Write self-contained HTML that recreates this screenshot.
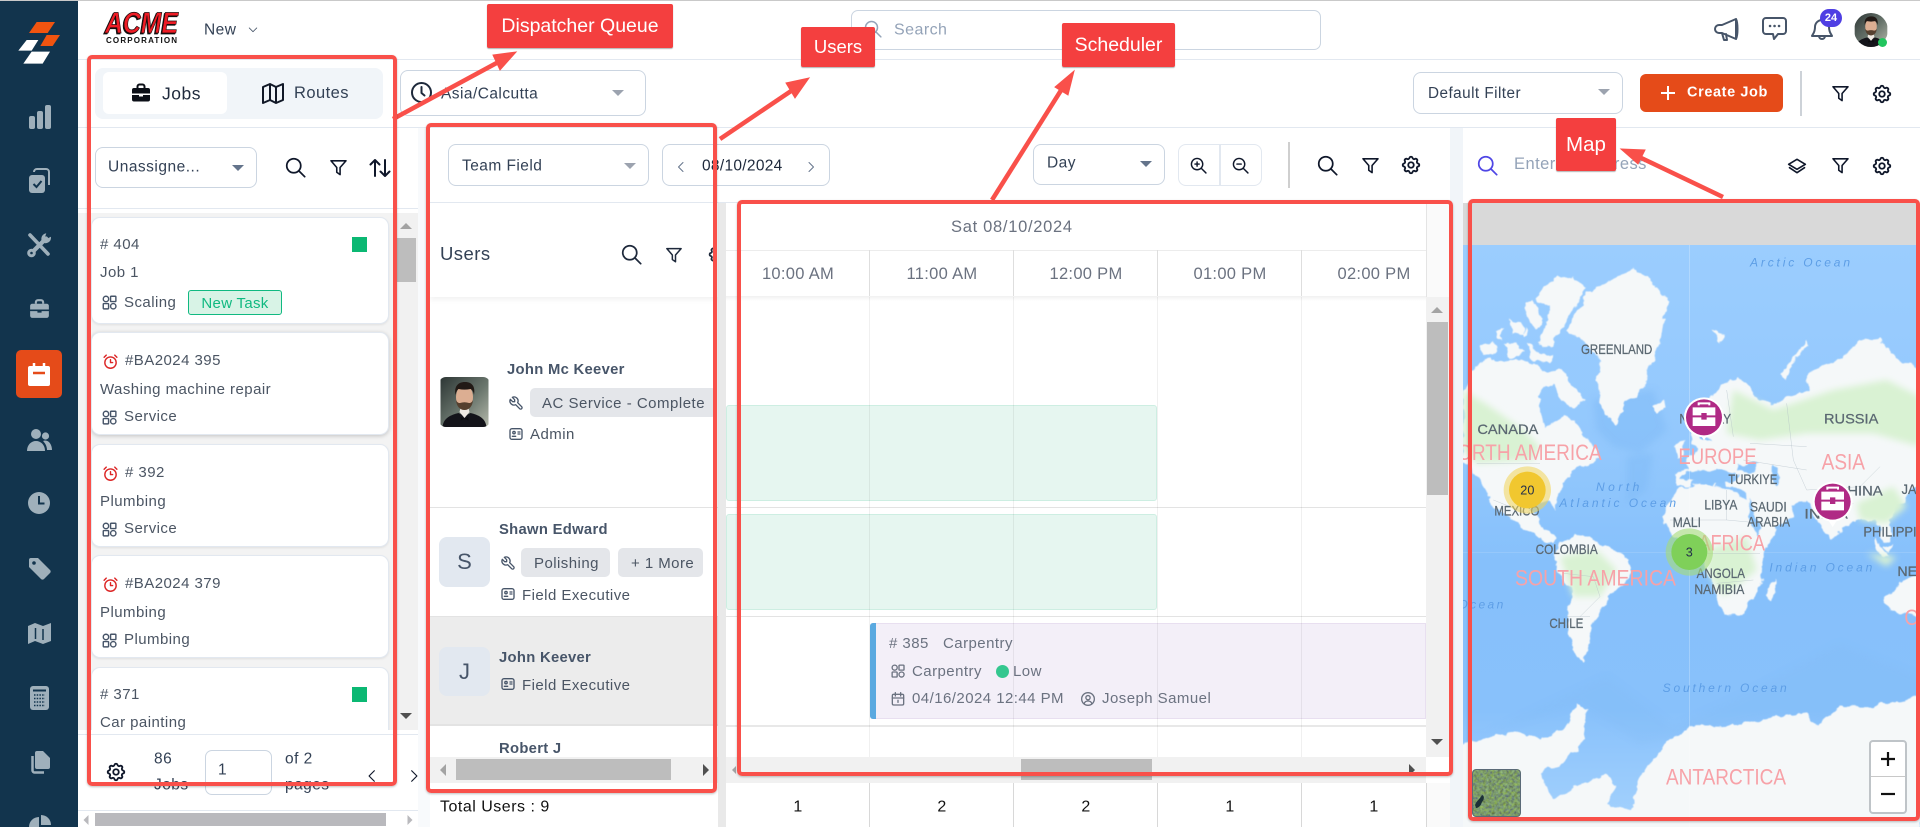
<!DOCTYPE html>
<html lang="en"><head><meta charset="utf-8"><title>Scheduler</title>
<style>
*{box-sizing:border-box}
html,body{margin:0;padding:0;width:1920px;height:827px;overflow:hidden;background:#fff;font-family:"Liberation Sans",sans-serif;color:#334155}
#p{position:absolute;left:0;top:0;width:1920px;height:827px;overflow:hidden}
.a{position:absolute}
.t{position:absolute;white-space:nowrap;transform:translateY(calc(-50% + 3px));font-size:15px;letter-spacing:.45px;line-height:1.2}
.sel{position:absolute;background:#fff;border:1px solid #cbd5e1;border-radius:8px}
.caret{position:absolute;width:0;height:0;border-left:6px solid transparent;border-right:6px solid transparent;border-top:6px solid #64748b;transform:translate(-50%,-50%)}
.ic{position:absolute;fill:none;stroke:currentColor;stroke-width:2;stroke-linecap:round;stroke-linejoin:round}
.card{position:absolute;left:91px;width:298px;background:#fff;border:1px solid #e2e8f0;border-radius:9px;box-shadow:0 1px 2px rgba(0,0,0,.08)}
.g{color:#4b5563}
.chip{position:absolute;background:#e4e6ea;border-radius:5px}
.nm{font-weight:bold;color:#475569;font-size:14.8px;letter-spacing:.3px}
.av{position:absolute;left:439px;width:51px;background:#e2e8f0;border-radius:8px;color:#475569;font-size:22px;display:flex;align-items:center;justify-content:center}
.h{position:absolute;height:1px}
.v{position:absolute;width:1px}
.lab{position:absolute;background:#f43f3f;color:#fff;font-size:19.5px;border-radius:2px;box-shadow:0 1px 1px rgba(0,0,0,.3);display:flex;align-items:center;justify-content:center}
.red{position:absolute;border:4px solid #f9504a;border-radius:5px;box-shadow:0 1px 2px rgba(0,0,0,.25)}
.tm{color:#6b7280;font-size:16.5px;letter-spacing:.3px;transform:translate(-50%,calc(-50% + 3px))}
.tot{color:#111;font-size:16px;transform:translate(-50%,calc(-50% + 3px))}
.ev{color:#6b7280}
.map-c{font-family:"Liberation Sans",sans-serif;fill:#f7a2a8;font-size:66px}
.map-n{font-family:"Liberation Sans",sans-serif;fill:#5b6872;stroke:#5b6872;stroke-width:.8;font-size:42px}
.map-o{font-family:"Liberation Sans",sans-serif;fill:#5d9ee6;font-size:36px;font-style:italic}
</style></head><body><div id="p">

<svg width="0" height="0" style="position:absolute">
<defs>
<symbol id="search" viewBox="0 0 24 24"><circle cx="10" cy="10" r="8"/><path d="M16 16l6.500 6.500"/></symbol>
<symbol id="filter" viewBox="0 0 24 24"><path d="M2.500 3.500h19l-7.500 8.500v9l-4.200-3v-6z"/></symbol>
<symbol id="gear" viewBox="0 0 24 24"><path d="M10.325 4.317c.426 -1.756 2.924 -1.756 3.350 0a1.724 1.724 0 0 0 2.573 1.066c1.543 -.94 3.310 .826 2.370 2.370a1.724 1.724 0 0 0 1.065 2.572c1.756 .426 1.756 2.924 0 3.350a1.724 1.724 0 0 0 -1.066 2.573c.94 1.543 -.826 3.310 -2.370 2.370a1.724 1.724 0 0 0 -2.572 1.065c-.426 1.756 -2.924 1.756 -3.350 0a1.724 1.724 0 0 0 -2.573 -1.066c-1.543 .94 -3.310 -.826 -2.370 -2.370a1.724 1.724 0 0 0 -1.065 -2.572c-1.756 -.426 -1.756 -2.924 0 -3.350a1.724 1.724 0 0 0 1.066 -2.573c-.94 -1.543 .826 -3.310 2.370 -2.370c1 .608 2.296 .07 2.572 -1.065z"/><circle cx="12" cy="12" r="3"/></symbol>
<symbol id="grid" viewBox="0 0 24 24"><circle cx="7" cy="7" r="3.800"/><rect x="13.500" y="3.200" width="7.500" height="7.500" rx="1"/><rect x="3.200" y="13.500" width="7.500" height="7.500" rx="1"/><circle cx="17.300" cy="17.300" r="3.800"/></symbol>
<symbol id="alarm" viewBox="0 0 24 24"><circle cx="12" cy="13.500" r="8"/><path d="M12 9.500v4h3M3 6l3-3M21 6l-3-3"/></symbol>
<symbol id="wrench" viewBox="0 0 24 24"><path d="M7 10h3v-3l-3.500 -3.500a6 6 0 0 1 8 8l6 6a2 2 0 0 1 -3 3l-6 -6a6 6 0 0 1 -8 -8l3.500 3.500"/></symbol>
<symbol id="idc" viewBox="0 0 24 24"><rect x="3" y="4" width="18" height="16" rx="3"/><circle cx="9" cy="10" r="1.800"/><path d="M6.500 15.500h5M15 9h3M15 12h3"/></symbol>
<symbol id="cal" viewBox="0 0 24 24"><rect x="3.500" y="5" width="17" height="16" rx="2"/><path d="M8 2.500v5M16 2.500v5M3.500 10.500h17M12 14v3"/></symbol>
<symbol id="usr" viewBox="0 0 24 24"><circle cx="12" cy="12" r="9.500"/><circle cx="12" cy="10" r="3.200"/><path d="M6.200 19c1-3 3.200-4 5.800-4s4.800 1 5.800 4"/></symbol>
<symbol id="chev" viewBox="0 0 24 24"><path d="M8 3l9 9-9 9"/></symbol>
<symbol id="chevl" viewBox="0 0 24 24"><path d="M16 3l-9 9 9 9"/></symbol>
<symbol id="person" viewBox="0 0 48 50">
<defs><linearGradient id="pg" x1="0" x2="1" y1="0" y2="1"><stop offset="0" stop-color="#2d3635"/><stop offset=".55" stop-color="#6a766d"/><stop offset="1" stop-color="#b5b9ab"/></linearGradient></defs>
<rect width="48" height="50" fill="url(#pg)"/>
<path d="M2 50c1-9 8-12 16-14l6 3 6-3c8 2 15 5 16 14z" fill="#14141a"/>
<path d="M19 35l5 6 5-6-1-4h-8z" fill="#efe9e2"/><path d="M20 40l4 1.500 4-1.500v3.500l-4-1.500-4 1.500z" fill="#0b0b0e"/>
<ellipse cx="24" cy="20" rx="8.500" ry="12" fill="#dcae92"/>
<path d="M15.500 23c.5 6 3.500 10 8.500 10s8-4 8.500-10c-1 2-2 3-4 3-3-1-6-1-9 0-2 0-3-1-4-3z" fill="#55402f"/>
<path d="M15 18c-1.500-8 2-13 9.500-13s10.500 5 9 13c-.5-3-1.500-5-3.500-6-4 .8-8 .8-12 0-1.500 1-2.500 3-3 6z" fill="#221a16"/>
</symbol>
<symbol id="bag" viewBox="0 0 24 24"><path d="M8.500 7V5.500a2 2 0 0 1 2-2h3a2 2 0 0 1 2 2V7" fill="none" stroke="currentColor" stroke-width="2"/><path d="M3 9a2 2 0 0 1 2-2h14a2 2 0 0 1 2 2v3.500H3z" fill="currentColor"/><path d="M3 14h7v1.500h4V14h7v4.500a2 2 0 0 1-2 2H5a2 2 0 0 1-2-2z" fill="currentColor"/></symbol>
</defs></svg>

<!-- sidebar -->
<div class="a" style="left:0;top:0;width:78px;height:827px;background:#12344d"></div>
<div class="a" style="left:0;top:0;width:1920px;height:1px;background:#c9c9c9"></div>
<svg class="a" style="left:0;top:0" width="78" height="70" viewBox="0 0 234 210">
<path d="M110 66h55l-22 33h-56z" fill="#f05410"/><path d="M140 105h40l-22 33h-37z" fill="#f05410"/>
<path d="M80 120h35l-20 32H55z" fill="#fff"/><path d="M95 155h55l-22 36H70z" fill="#fff"/></svg>
<svg class="a" style="left:26px;top:103px;color:#9fb0bb" width="26" height="26" viewBox="0 0 26 26" fill="#9fb0bb"><rect x="3" y="13" width="6" height="13" rx="2"/><rect x="11" y="8" width="6" height="18" rx="2"/><rect x="19" y="2" width="6" height="24" rx="2"/></svg>
<svg class="a" style="left:26px;top:167px" width="26" height="26" viewBox="0 0 26 26"><rect x="3" y="8" width="16" height="18" rx="3" fill="#9fb0bb"/><path d="M8 5a3 3 0 0 1 3-3h9a3 3 0 0 1 3 3v13" fill="none" stroke="#9fb0bb" stroke-width="2"/><path d="M7.500 17l3 3 5-6" fill="none" stroke="#12344d" stroke-width="2"/></svg>
<svg class="a" style="left:26px;top:232px" width="26" height="26" viewBox="0 0 26 26" fill="none" stroke="#9fb0bb" stroke-linecap="round"><path d="M4 3l18 19" stroke-width="3.600"/><path d="M20 6.500L5.500 21" stroke-width="4.200"/><path d="M24.500 5.500a5 5 0 0 1-7.500 4.500 5 5 0 0 1 2.500-8l-1 3 3 2z" fill="#9fb0bb" stroke-width="1"/><circle cx="5.500" cy="21" r="3.800" fill="#9fb0bb" stroke-width="1"/><circle cx="5.500" cy="21" r="1.300" fill="#12344d" stroke="none"/></svg>
<svg class="a" style="left:27px;top:296px;color:#9fb0bb" width="25" height="26"><use href="#bag"/></svg>
<div class="a" style="left:16px;top:350px;width:46px;height:48px;background:#e54b19;border-radius:5px"></div>
<svg class="a" style="left:27px;top:362px" width="24" height="25" viewBox="0 0 24 25"><path d="M3 4h18a2 2 0 0 1 2 2v16a2 2 0 0 1-2 2H3a2 2 0 0 1-2-2V6a2 2 0 0 1 2-2z" fill="#fff"/><path d="M7 1v5M17 1v5" stroke="#fff" stroke-width="2.500"/><path d="M6 11h12" stroke="#e54b19" stroke-width="2.500"/></svg>
<svg class="a" style="left:27px;top:428px" width="25" height="24" viewBox="0 0 25 24" fill="#9fb0bb"><circle cx="9" cy="6" r="5"/><circle cx="18.500" cy="8" r="3.600"/><path d="M0 23c0-6 4-10 9-10s9 4 9 10z"/><path d="M16 13c5-2 9 3 9 9h-5c0-4-2-7-4-9z"/></svg>
<svg class="a" style="left:28px;top:492px" width="22" height="22" viewBox="0 0 22 22"><circle cx="11" cy="11" r="11" fill="#9fb0bb"/><path d="M11 4v7.500h5.500" fill="none" stroke="#12344d" stroke-width="2"/></svg>
<svg class="a" style="left:28px;top:557px" width="23" height="23" viewBox="0 0 23 23"><path d="M1 3a2 2 0 0 1 2-2h7l12 12a2 2 0 0 1 0 3l-6 6a2 2 0 0 1-3 0L1 10z" fill="#9fb0bb"/><circle cx="6" cy="6" r="1.800" fill="#12344d"/></svg>
<svg class="a" style="left:28px;top:622px" width="23" height="23" viewBox="0 0 23 23"><path d="M0 4l7-3 8 3 8-3v18l-8 3-8-3-7 3z" fill="#9fb0bb"/><path d="M7.500 6v11M15 7v11" stroke="#12344d" stroke-width="1.500"/></svg>
<svg class="a" style="left:30px;top:686px" width="19" height="24" viewBox="0 0 19 24"><rect width="19" height="24" rx="3" fill="#9fb0bb"/><rect x="3" y="3.500" width="13" height="2" fill="#12344d"/><path d="M4 9h11M4 12.500h11M4 16h11M4 19.500h11" stroke="#12344d" stroke-width="1.500" stroke-dasharray="1.500 1.200"/></svg>
<svg class="a" style="left:29px;top:751px" width="21" height="24" viewBox="0 0 21 24"><path d="M8 0h6l7 7v9a2 2 0 0 1-2 2H8a2 2 0 0 1-2-2V2a2 2 0 0 1 2-2z" fill="#9fb0bb"/><path d="M3.500 5v14.500a2 2 0 0 0 2 2H15" fill="none" stroke="#9fb0bb" stroke-width="2.500"/></svg>
<svg class="a" style="left:29px;top:815px" width="22" height="12" viewBox="0 0 22 12"><path d="M10 2a10 10 0 0 0-10 10h10zM12 0a10 10 0 0 1 10 10H12z" fill="#9fb0bb"/></svg>

<!-- header -->
<div class="h" style="left:78px;top:59px;width:1842px;background:#e2e8f0"></div>
<svg class="a" style="left:100px;top:8px" width="84" height="38" viewBox="0 0 84 38">
<text x="5" y="25" font-family="Liberation Sans" font-weight="bold" font-style="italic" font-size="30" fill="#ee1c25" stroke="#1a0a0a" stroke-width=".7" textLength="73" lengthAdjust="spacingAndGlyphs" style="filter:drop-shadow(-1px 1px 0 #111)">ACME</text>
<text x="6" y="35" font-family="Liberation Sans" font-weight="bold" font-size="8" fill="#111" textLength="71" lengthAdjust="spacing">CORPORATION</text></svg>
<div class="t" style="left:204px;top:28px;font-size:15.5px;color:#334155">New</div>
<svg class="ic" style="left:248px;top:25px;color:#475569" width="10" height="10" viewBox="0 0 24 24"><path d="M3 7l9 9 9-9"/></svg>
<div class="a" style="left:851px;top:10px;width:470px;height:40px;border:1px solid #cbd5e1;border-radius:7px"></div>
<svg class="ic" style="left:864px;top:20px;color:#94a3b8" width="18" height="18"><use href="#search"/></svg>
<div class="t" style="left:894px;top:27px;font-size:16px;color:#94a3b8">Search</div>
<svg class="ic" style="left:1714px;top:16px;color:#475569" width="27" height="27" viewBox="0 0 27 27"><path d="M22 3L8 9H5a3.500 3.500 0 0 0 0 8h3l14 6zM8 17l2 7h3l-1-6M22 3c2 4 2 16 0 20"/></svg>
<svg class="ic" style="left:1761px;top:16px;color:#475569" width="27" height="27" viewBox="0 0 27 27"><path d="M5 2h17a3 3 0 0 1 3 3v10a3 3 0 0 1-3 3h-5l-4 5-1-5H5a3 3 0 0 1-3-3V5a3 3 0 0 1 3-3z"/><path d="M9 10h.1M13.500 10h.1M18 10h.1" stroke-width="2.500"/></svg>
<svg class="ic" style="left:1810px;top:17px;color:#475569" width="25" height="26" viewBox="0 0 25 26"><path d="M12 3a7 7 0 0 1 7 7c0 6 3 8 3 9H2c0-1 3-3 3-9a7 7 0 0 1 7-7zM9 19a3 3 0 0 0 6 0"/></svg>
<div class="a" style="left:1820px;top:9px;width:22px;height:18px;border-radius:9px;background:#4f3fe3;color:#fff;font-size:11px;font-weight:bold;text-align:center;line-height:18px">24</div>
<svg class="a" style="left:1854px;top:13px;border-radius:50%" width="34" height="34"><use href="#person" width="34" height="34"/></svg>
<div class="a" style="left:1878px;top:38px;width:9px;height:9px;border-radius:50%;background:#22c55e"></div>

<!-- subheader -->
<div class="h" style="left:78px;top:127px;width:1842px;background:#e2e8f0"></div>
<div class="a" style="left:95px;top:68px;width:288px;height:51px;background:#f1f5f9;border-radius:8px"></div>
<div class="a" style="left:103px;top:72px;width:124px;height:42px;background:#fff;border-radius:6px"></div>
<svg class="a" style="left:129px;top:81px;color:#0b0f17" width="24" height="24"><use href="#bag"/></svg>
<div class="t" style="left:162px;top:91px;font-size:17.500px;letter-spacing:.5px;color:#1e293b">Jobs</div>
<svg class="ic" style="left:261px;top:81px;color:#111827" width="24" height="24"><path d="M2 6l7-3 6 3 7-3v16l-7 3-6-3-7 3zM9 3v16M15 6v16"/></svg>
<div class="t" style="left:294px;top:91px;font-size:16.5px;color:#334155">Routes</div>

<div class="sel" style="left:400px;top:70px;width:246px;height:46px"></div>
<svg class="ic" style="left:411px;top:82px;color:#1e293b" width="21" height="21"><circle cx="10.500" cy="10.500" r="9.500"/><path d="M10.500 5v6l3 2.500"/></svg>
<div class="t" style="left:441px;top:92px;font-size:15.5px">Asia/Calcutta</div>
<div class="caret" style="left:618px;top:93px;border-top-color:#9ca3af"></div>

<div class="sel" style="left:1413px;top:72px;width:210px;height:42px"></div>
<div class="t" style="left:1428px;top:91px;font-size:15.3px">Default Filter</div>
<div class="caret" style="left:1604px;top:92px;border-top-color:#9ca3af"></div>
<div class="a" style="left:1640px;top:74px;width:143px;height:38px;background:#e54b19;border-radius:6px"></div>
<svg class="a" style="left:1660px;top:85px" width="16" height="16"><path d="M8 1v14M1 8h14" stroke="#fff" stroke-width="2"/></svg>
<div class="t" style="left:1687px;top:90px;color:#fff;font-weight:bold;font-size:14.5px;letter-spacing:.6px">Create Job</div>
<div class="a" style="left:1800px;top:71px;width:2px;height:45px;background:#cdd2d8"></div>
<svg class="ic" style="left:1831px;top:84px;color:#0f172a" width="19" height="19"><use href="#filter"/></svg>
<svg class="ic" style="left:1871px;top:83px;color:#0f172a" width="22" height="22"><use href="#gear"/></svg>

<!-- dispatcher -->
<div class="a" style="left:78px;top:128px;width:340px;height:699px;background:#fff"></div>
<div class="h" style="left:78px;top:208px;width:340px;background:#e2e8f0"></div>
<div class="sel" style="left:95px;top:147px;width:162px;height:41px"></div>
<div class="t" style="left:108px;top:165px;font-size:15.5px;letter-spacing:.5px">Unassigne...</div>
<div class="caret" style="left:238px;top:168px"></div>
<svg class="ic" style="left:285px;top:157px;color:#0f172a" width="21" height="21"><use href="#search"/></svg>
<svg class="ic" style="left:329px;top:158px;color:#0f172a" width="19" height="19"><use href="#filter"/></svg>
<svg class="ic" style="left:369px;top:158px;color:#0f172a" width="22" height="20" viewBox="0 0 22 20"><path d="M6 18V2M1.500 6.500L6 2l4.500 4.500M16 2v16M11.500 13.500L16 18l4.500-4.500"/></svg>

<div class="a" style="left:78px;top:213px;width:317px;height:517px;background:#f3f3f3"></div>
<div class="a" style="left:395px;top:213px;width:23px;height:517px;background:#f1f1f1"></div>
<div class="a" style="left:397px;top:238px;width:19px;height:44px;background:#bdbdbd"></div>
<div class="caret" style="left:406px;top:226px;border-top:0;border-bottom:6px solid #a3a3a3"></div>
<div class="caret" style="left:406px;top:716px;border-top-color:#505050"></div>

<div class="card" style="top:217px;height:107px"></div>
<div class="t g" style="left:100px;top:242px">#&nbsp;404</div>
<div class="a" style="left:352px;top:237px;width:15px;height:15px;background:#0bb873"></div>
<div class="t g" style="left:100px;top:270px">Job 1</div>
<svg class="ic" style="left:101px;top:294px;color:#475569" width="17" height="17"><use href="#grid"/></svg>
<div class="t g" style="left:124px;top:300px">Scaling</div>
<div class="a" style="left:188px;top:290px;width:94px;height:25px;background:#d8f3e6;border:1px solid #10b981;border-radius:3px;color:#10b981;font-size:15px;text-align:center;line-height:25px;letter-spacing:.3px">New Task</div>

<div class="card" style="top:332px;height:103px;box-shadow:0 1px 4px rgba(0,0,0,.2)"></div>
<svg class="ic" style="left:102px;top:353px;color:#dc2626" width="17" height="17"><use href="#alarm"/></svg>
<div class="t g" style="left:125px;top:358px">#BA2024 395</div>
<div class="t g" style="left:100px;top:387px">Washing machine repair</div>
<svg class="ic" style="left:101px;top:409px;color:#475569" width="17" height="17"><use href="#grid"/></svg>
<div class="t g" style="left:124px;top:414px">Service</div>

<div class="card" style="top:444px;height:103px"></div>
<svg class="ic" style="left:102px;top:465px;color:#dc2626" width="17" height="17"><use href="#alarm"/></svg>
<div class="t g" style="left:125px;top:470px">#&nbsp;392</div>
<div class="t g" style="left:100px;top:499px">Plumbing</div>
<svg class="ic" style="left:101px;top:521px;color:#475569" width="17" height="17"><use href="#grid"/></svg>
<div class="t g" style="left:124px;top:526px">Service</div>

<div class="card" style="top:555px;height:103px"></div>
<svg class="ic" style="left:102px;top:576px;color:#dc2626" width="17" height="17"><use href="#alarm"/></svg>
<div class="t g" style="left:125px;top:581px">#BA2024 379</div>
<div class="t g" style="left:100px;top:610px">Plumbing</div>
<svg class="ic" style="left:101px;top:632px;color:#475569" width="17" height="17"><use href="#grid"/></svg>
<div class="t g" style="left:124px;top:637px">Plumbing</div>

<div class="a" style="left:78px;top:667px;width:317px;height:63px;overflow:hidden">
<div class="card" style="left:13px;top:0;height:100px"></div>
<div class="t g" style="left:22px;top:25px">#&nbsp;371</div>
<div class="a" style="left:274px;top:20px;width:15px;height:15px;background:#0bb873"></div>
<div class="t g" style="left:22px;top:53px">Car painting</div>
</div>

<div class="h" style="left:78px;top:734px;width:340px;background:#e2e8f0"></div>
<svg class="ic" style="left:105px;top:761px;color:#0f172a" width="22" height="22"><use href="#gear"/></svg>
<div class="t" style="left:154px;top:757px;font-size:15.5px">86</div>
<div class="t" style="left:154px;top:783px;font-size:15.5px">Jobs</div>
<div class="a" style="left:205px;top:750px;width:67px;height:45px;border:1px solid #cbd5e1;border-radius:7px"></div>
<div class="t" style="left:218px;top:768px;font-size:15.5px">1</div>
<div class="t" style="left:285px;top:757px;font-size:15.5px">of 2</div>
<div class="t" style="left:285px;top:783px;font-size:15.5px">pages</div>
<svg class="ic" style="left:365px;top:767px;color:#0f172a" width="14" height="18"><use href="#chevl"/></svg>
<svg class="ic" style="left:407px;top:767px;color:#0f172a" width="14" height="18"><use href="#chev"/></svg>
<div class="h" style="left:78px;top:810px;width:340px;background:#e2e8f0"></div>
<div class="a" style="left:95px;top:813px;width:291px;height:13px;background:#b9b9bd"></div>
<div class="caret" style="left:86px;top:820px;border-left:0;border-right:5px solid #b9b9bd;border-top:5px solid transparent;border-bottom:5px solid transparent"></div>
<div class="caret" style="left:410px;top:820px;border-right:0;border-left:5px solid #b9b9bd;border-top:5px solid transparent;border-bottom:5px solid transparent"></div>

<!-- gap columns -->
<div class="a" style="left:418px;top:128px;width:12px;height:699px;background:#f8fafc"></div>
<div class="a" style="left:1450px;top:128px;width:13px;height:699px;background:#f1f5f9"></div>

<!-- middle toolbar -->
<div class="h" style="left:430px;top:202px;width:1020px;background:#e2e8f0"></div>
<div class="sel" style="left:448px;top:144px;width:201px;height:42px"></div>
<div class="t" style="left:462px;top:164px;font-size:15.5px">Team Field</div>
<div class="caret" style="left:630px;top:166px;border-top-color:#9ca3af"></div>
<div class="sel" style="left:662px;top:144px;width:168px;height:42px"></div>
<svg class="ic" style="left:675px;top:159px;color:#64748b" width="12" height="16"><use href="#chevl"/></svg>
<div class="t" style="left:702px;top:164px;font-size:15.5px;letter-spacing:.3px;color:#1e293b">08/10/2024</div>
<svg class="ic" style="left:805px;top:159px;color:#64748b" width="12" height="16"><use href="#chev"/></svg>
<div class="sel" style="left:1033px;top:144px;width:132px;height:41px"></div>
<div class="t" style="left:1047px;top:161px;font-size:15.5px">Day</div>
<div class="caret" style="left:1146px;top:164px"></div>
<div class="sel" style="left:1178px;top:144px;width:84px;height:42px;border-color:#e2e8f0"></div>
<div class="a" style="left:1219px;top:145px;width:2px;height:40px;background:#e2e8f0"></div>
<svg class="ic" style="left:1190px;top:157px;color:#0f172a" width="17" height="17"><use href="#search"/><path d="M7 10h6M10 7v6" transform="scale(.708)"/></svg>
<svg class="ic" style="left:1232px;top:157px;color:#0f172a" width="17" height="17"><use href="#search"/><path d="M7 10h6" transform="scale(.708)"/></svg>
<div class="a" style="left:1288px;top:142px;width:2px;height:46px;background:#cfcfcf"></div>
<svg class="ic" style="left:1317px;top:155px;color:#0f172a" width="21" height="21"><use href="#search"/></svg>
<svg class="ic" style="left:1361px;top:156px;color:#0f172a" width="19" height="19"><use href="#filter"/></svg>
<svg class="ic" style="left:1400px;top:154px;color:#0f172a" width="22" height="22"><use href="#gear"/></svg>

<!-- users panel -->
<div class="a" style="left:430px;top:203px;width:288px;height:94px;background:#fff;box-shadow:0 3px 5px rgba(0,0,0,.05)"></div>
<div class="t" style="left:440px;top:251px;font-size:18.5px;color:#334155">Users</div>
<svg class="ic" style="left:621px;top:244px;color:#1e293b" width="21" height="21"><use href="#search"/></svg>
<svg class="ic" style="left:665px;top:246px;color:#1e293b" width="18" height="18"><use href="#filter"/></svg>
<div class="a" style="left:705px;top:243px;width:11px;height:24px;overflow:hidden"><svg class="ic" style="left:2px;top:1px;color:#1e293b" width="21" height="21"><use href="#gear"/></svg></div>

<div class="h" style="left:430px;top:507px;width:288px;background:#e3e3e3"></div>
<div class="a" style="left:430px;top:616px;width:288px;height:110px;background:#ececec;border-top:1px solid #e3e3e3;border-bottom:2px solid #e3e3e3"></div>

<svg class="a" style="left:439px;top:377px;border-radius:7px" width="51" height="50"><use href="#person" width="51" height="50"/></svg>
<div class="t nm" style="left:507px;top:368px">John Mc Keever</div>
<svg class="ic" style="left:508px;top:395px;color:#475569" width="16" height="16"><use href="#wrench"/></svg>
<div class="chip" style="left:530px;top:388px;width:187px;height:29px"></div>
<div class="t g" style="left:542px;top:401px;letter-spacing:.5px">AC Service - Complete</div>
<svg class="ic" style="left:508px;top:426px;color:#475569" width="16" height="16"><use href="#idc"/></svg>
<div class="t g" style="left:530px;top:432px">Admin</div>

<div class="av" style="top:537px;height:50px">S</div>
<div class="t nm" style="left:499px;top:528px">Shawn Edward</div>
<svg class="ic" style="left:500px;top:555px;color:#475569" width="16" height="16"><use href="#wrench"/></svg>
<div class="chip" style="left:521px;top:548px;width:89px;height:29px"></div>
<div class="t g" style="left:534px;top:561px">Polishing</div>
<div class="chip" style="left:618px;top:548px;width:85px;height:29px"></div>
<div class="t g" style="left:631px;top:561px">+ 1 More</div>
<svg class="ic" style="left:500px;top:586px;color:#475569" width="16" height="16"><use href="#idc"/></svg>
<div class="t g" style="left:522px;top:593px">Field Executive</div>

<div class="av" style="top:647px;height:49px">J</div>
<div class="t nm" style="left:499px;top:656px">John Keever</div>
<svg class="ic" style="left:500px;top:676px;color:#475569" width="16" height="16"><use href="#idc"/></svg>
<div class="t g" style="left:522px;top:683px">Field Executive</div>
<div class="t nm" style="left:499px;top:747px">Robert J</div>

<div class="a" style="left:430px;top:757px;width:288px;height:26px;background:#f1f1f1"></div>
<div class="a" style="left:456px;top:759px;width:215px;height:21px;background:#bdbdbd"></div>
<div class="caret" style="left:443px;top:770px;border-left:0;border-right:6px solid #a3a3a3;border-top:6px solid transparent;border-bottom:6px solid transparent"></div>
<div class="caret" style="left:706px;top:770px;border-right:0;border-left:6px solid #505050;border-top:6px solid transparent;border-bottom:6px solid transparent"></div>
<div class="t" style="left:440px;top:804px;font-size:16px;font-weight:normal;color:#111;letter-spacing:.5px">Total Users : 9</div>

<!-- divider -->
<div class="a" style="left:718px;top:203px;width:8px;height:624px;background:#e9e9e9"></div>

<!-- scheduler -->
<div class="h" style="left:726px;top:250px;width:700px;background:#ececec"></div>
<div class="a" style="left:726px;top:296px;width:700px;height:5px;background:linear-gradient(#f1f1f1,#fff)"></div>
<div class="t" style="left:951px;top:225px;font-size:16.5px;color:#6b7280;letter-spacing:.7px">Sat 08/10/2024</div>
<div class="t tm" style="left:798px;top:272px">10:00 AM</div>
<div class="t tm" style="left:942px;top:272px">11:00 AM</div>
<div class="t tm" style="left:1086px;top:272px">12:00 PM</div>
<div class="t tm" style="left:1230px;top:272px">01:00 PM</div>
<div class="t tm" style="left:1374px;top:272px">02:00 PM</div>
<div class="v" style="left:869px;top:250px;height:46px;background:#dedede"></div>
<div class="v" style="left:1013px;top:250px;height:46px;background:#dedede"></div>
<div class="v" style="left:1157px;top:250px;height:46px;background:#dedede"></div>
<div class="v" style="left:1301px;top:250px;height:46px;background:#dedede"></div>
<div class="a" style="left:1426px;top:203px;width:24px;height:94px;background:#fafafa;border-left:1px solid #e4e4e4"></div>

<div class="a" style="left:726px;top:405px;width:431px;height:96px;background:#e6f6f0;border:1px solid #cdeee2;border-radius:3px"></div>
<div class="a" style="left:726px;top:514px;width:431px;height:96px;background:#e6f6f0;border:1px solid #cdeee2;border-radius:3px"></div>
<div class="a" style="left:870px;top:623px;width:556px;height:96px;background:#f3eff8;border:1px solid #e8dff0;border-left:0;border-radius:3px 0 0 3px"></div>
<div class="a" style="left:870px;top:623px;width:6px;height:96px;background:#5aa9e0;border-radius:3px 0 0 3px"></div>
<div class="h" style="left:726px;top:507px;width:700px;background:#e3e3e3"></div>
<div class="h" style="left:726px;top:616px;width:700px;background:#e3e3e3"></div>
<div class="h" style="left:726px;top:725px;width:700px;height:2px;background:#e8e8e8"></div>
<div class="v" style="left:869px;top:297px;height:460px;background:rgba(0,0,0,.06)"></div>
<div class="v" style="left:1013px;top:297px;height:460px;background:rgba(0,0,0,.06)"></div>
<div class="v" style="left:1157px;top:297px;height:460px;background:rgba(0,0,0,.06)"></div>
<div class="v" style="left:1301px;top:297px;height:460px;background:rgba(0,0,0,.06)"></div>

<div class="t ev" style="left:889px;top:641px">#&nbsp;385</div>
<div class="t ev" style="left:943px;top:641px">Carpentry</div>
<svg class="ic" style="left:890px;top:663px;color:#6b7280" width="16" height="16"><use href="#grid"/></svg>
<div class="t ev" style="left:912px;top:669px">Carpentry</div>
<div class="a" style="left:996px;top:665px;width:13px;height:13px;border-radius:50%;background:#34c78f"></div>
<div class="t ev" style="left:1013px;top:669px">Low</div>
<svg class="ic" style="left:890px;top:691px;color:#6b7280" width="16" height="16"><use href="#cal"/></svg>
<div class="t ev" style="left:912px;top:696px">04/16/2024 12:44 PM</div>
<svg class="ic" style="left:1080px;top:691px;color:#6b7280" width="16" height="16"><use href="#usr"/></svg>
<div class="t ev" style="left:1102px;top:696px">Joseph Samuel</div>

<div class="a" style="left:726px;top:757px;width:700px;height:26px;background:#f1f1f1"></div>
<div class="a" style="left:1021px;top:759px;width:131px;height:21px;background:#bdbdbd"></div>
<div class="caret" style="left:734px;top:770px;border-left:0;border-right:4px solid #a3a3a3;border-top:4px solid transparent;border-bottom:4px solid transparent"></div>
<div class="caret" style="left:1412px;top:770px;border-right:0;border-left:6px solid #505050;border-top:6px solid transparent;border-bottom:6px solid transparent"></div>
<div class="a" style="left:1426px;top:297px;width:24px;height:460px;background:#f1f1f1"></div>
<div class="a" style="left:1427px;top:322px;width:21px;height:173px;background:#bdbdbd"></div>
<div class="caret" style="left:1437px;top:310px;border-top:0;border-bottom:6px solid #a3a3a3"></div>
<div class="caret" style="left:1437px;top:742px;border-top-color:#505050"></div>

<div class="v" style="left:869px;top:783px;height:44px;background:#d8d8d8"></div>
<div class="v" style="left:1013px;top:783px;height:44px;background:#d8d8d8"></div>
<div class="v" style="left:1157px;top:783px;height:44px;background:#d8d8d8"></div>
<div class="v" style="left:1301px;top:783px;height:44px;background:#d8d8d8"></div>
<div class="a" style="left:1426px;top:783px;width:24px;height:44px;background:#fafafa;border-left:1px solid #d8d8d8"></div>
<div class="t tot" style="left:798px;top:804px">1</div>
<div class="t tot" style="left:942px;top:804px">2</div>
<div class="t tot" style="left:1086px;top:804px">2</div>
<div class="t tot" style="left:1230px;top:804px">1</div>
<div class="t tot" style="left:1374px;top:804px">1</div>

<!-- map toolbar -->
<svg class="ic" style="left:1477px;top:155px;color:#4f46e5" width="21" height="21"><use href="#search"/></svg>
<div class="t" style="left:1514px;top:162px;font-size:16.5px;color:#94a3b8">Enter an address</div>
<svg class="ic" style="left:1787px;top:156px;color:#0f172a" width="20" height="20" viewBox="0 0 24 24"><path d="M12 4l10 6-10 6-10-6zM3 14l9 6 9-6"/></svg>
<svg class="ic" style="left:1831px;top:156px;color:#0f172a" width="19" height="19"><use href="#filter"/></svg>
<svg class="ic" style="left:1871px;top:155px;color:#0f172a" width="22" height="22"><use href="#gear"/></svg>

<!-- map -->
<div class="a" style="left:1463px;top:203px;width:457px;height:42px;background:#d9d9d9"></div>
<svg class="a" style="left:1463px;top:245px" width="457" height="582" viewBox="69 -495 1371 1746">
<defs>
<linearGradient id="oc" x1="0" x2="0" y1="0" y2="1"><stop offset="0" stop-color="#9bcdfe"/><stop offset=".35" stop-color="#93c8fd"/><stop offset=".55" stop-color="#86c0fb"/><stop offset=".8" stop-color="#88c1fb"/><stop offset="1" stop-color="#a5d2fd"/></linearGradient>
<filter id="co" filterUnits="userSpaceOnUse" x="0" y="-500" width="1500" height="1800"><feTurbulence type="fractalNoise" baseFrequency=".03" numOctaves="3" seed="4" result="n"/><feDisplacementMap in="SourceGraphic" in2="n" scale="26" xChannelSelector="R" yChannelSelector="G"/><feGaussianBlur stdDeviation="1.500"/></filter>
<filter id="bg" filterUnits="userSpaceOnUse" x="0" y="-500" width="1500" height="1800"><feGaussianBlur stdDeviation="10"/></filter>
<filter id="sat" x="0" y="0" width="100%" height="100%"><feTurbulence type="fractalNoise" baseFrequency=".35" numOctaves="2" seed="7"/><feColorMatrix values=".3 0 0 0 .05  .55 0 0 0 .05  0 .25 0 0 .02  0 0 0 0 1"/></filter>
</defs>
<rect x="69" y="-495" width="1371" height="1746" fill="url(#oc)"/>
<g fill="#7fbaf6" opacity=".5" filter="url(#bg)"><path d="M460 -30L640 -60 680 60 600 130 520 110 470 60z"/><path d="M560 140L640 130 620 240 560 280z"/><path d="M69 1000L500 800 700 950 900 860 1200 700 1440 800 1440 960 1000 920 600 1000 420 880 100 980z" opacity=".4"/></g>
<g fill="#f5f8f9" filter="url(#co)">
 <g transform="translate(60,-240)">
 <path d="M225 -100L280 -155 340 -160 378 -125 350 -80 300 0 280 50 235 40 260 -30 270 -70 230 -80z"/>
 <path d="M200 -80L215 -90 250 -30 230 0 200 -40z"/>
 <path d="M320 0L345 -50 380 -110 450 -150 520 -185 575 -150 590 -115 630 -85 610 -30 600 40 570 110 550 170 500 215 470 285 440 260 420 200 410 140 415 90 395 50 360 30z"/>
 <path d="M150 -30L180 -20 190 10 160 10zM110 0L130 -10 130 30 115 25zM190 -10L205 10 190 20zM60 50L100 30 110 70 70 75zM130 40L170 40 190 70 150 90zM200 35L240 70 280 80 270 100 220 95z"/>
 <path d="M10 190L40 115 90 85 130 100 170 90 230 105 250 120 300 120 345 175 375 210 345 235 300 205 290 170 250 165 240 195 240 240 260 290 310 255 340 270 390 340 425 380 400 400 340 420 310 470 285 510 292 545 270 510 230 525 210 540 250 590 290 625 280 640 220 610 150 565 100 530 60 450 10 390z"/>
 <path d="M280 680L300 640 345 610 420 640 510 690 510 740 440 810 400 880 370 1000 340 960 320 880 340 780 290 720z"/>
 <path d="M570 225L615 210 620 235 590 245z"/>
 <path d="M645 350L670 330 670 375 650 380z"/>
 <path d="M645 470L650 425 690 420 680 390 720 360 700 340 690 300 760 190 830 140 880 180 900 210 930 220 1000 195 1050 180 1040 130 1090 110 1150 80 1200 30 1260 25 1290 70 1380 120 1385 460 1340 500 1310 530 1290 560 1300 620 1270 640 1250 570 1190 570 1160 590 1110 630 1070 570 1040 510 990 530 1000 560 900 620 870 530 850 480 800 470 790 430 770 420 760 470 720 430 690 470z"/>
 <path d="M960 130L1010 70 1040 30 1045 45 1000 90 975 150zM760 0L790 10 780 40zM1240 620L1290 680 1260 680zM1270 650L1300 640 1290 670zM1330 470L1350 440 1360 480 1330 510z"/>
 <path d="M605 560L650 480 740 460 830 490 900 540 950 600 910 680 900 770 840 860 790 860 760 780 730 690 680 630 640 620z"/>
 <path d="M930 760L950 740 935 810 915 800z"/>
 </g>
 <path d="M1330 560L1420 500 1440 490 1440 620 1380 610 1340 600z"/>
 <path d="M69 1000L100 990 230 965 300 985 370 960 410 880 440 900 430 990 370 1060 300 1090 340 1170 420 1120 500 1090 530 1130 500 1180 570 1200 600 1100 680 1000 750 950 850 950 1000 925 1100 910 1130 950 1200 890 1300 890 1440 860 1440 1300 30 1300 30 1000z"/>
</g>
<g fill="#d9f2d3" filter="url(#bg)">
<path d="M69 -60L150 -10 250 60 300 110 280 150 110 160 69 120z"/>
<path d="M360 440L470 420 530 480 480 560 400 560z"/>
<path d="M800 420L920 380 950 480 850 560 800 480z"/>
<path d="M880 -60L1000 0 1180 -60 1340 -90 1440 -40 1440 110 1300 70 1100 70 960 90 860 70z"/>
<path d="M1250 280L1360 230 1400 290 1340 340 1260 330z"/>
<path d="M1280 430L1370 440 1340 470z"/>
</g>
<g fill="#8cc4fb" filter="url(#co)">
<path d="M720 200L760 180 830 185 900 195 880 215 800 222 720 205z"/>
<path d="M890 165L950 160 940 185 890 185zM995 165L1015 170 1010 225 995 215z"/>
<path d="M790 30L830 0 830 40 800 75 810 95 780 80z"/>
<path d="M930 265L960 345 950 380 925 320z"/>
</g>
<g fill="none" stroke="#aab8c2" stroke-width="1.500" opacity=".6">
<path d="M110 160H300M160 270L260 310 300 275M370 490L460 500 480 560 420 620M380 620L450 620"/>
<path d="M690 330H860V240M860 330L970 340M800 430L960 430M830 520L940 510M1040 -20L1060 150 1100 240 1260 230 1320 170M930 100L1100 110M910 150L1100 180M1180 330L1240 280M860 -60L880 80"/>
</g>
<line x1="748" x2="748" y1="-495" y2="1251" stroke="#fff" stroke-opacity=".35" stroke-width="2"/>
<line x1="69" x2="1440" y1="427" y2="427" stroke="#fff" stroke-opacity=".2" stroke-width="2"/>

<text class="map-o" x="930" y="-430" textLength="300">Arctic Ocean</text>
<text class="map-o" x="468" y="243" textLength="130">North</text>
<text class="map-o" x="358" y="291" textLength="350">Atlantic Ocean</text>
<text class="map-o" x="988" y="485" textLength="309">Indian Ocean</text>
<text class="map-o" x="668" y="846" textLength="372">Southern Ocean</text>
<text class="map-o" x="55" y="596" textLength="135">Ocean</text>

<text class="map-n" x="423" y="-168" textLength="214" lengthAdjust="spacingAndGlyphs">GREENLAND</text>
<text class="map-n" x="112" y="72" textLength="183" lengthAdjust="spacingAndGlyphs">CANADA</text>
<text class="map-n" x="1152" y="41" textLength="163" lengthAdjust="spacingAndGlyphs">RUSSIA</text>
<text class="map-n" x="163" y="317" textLength="135" lengthAdjust="spacingAndGlyphs">MEXICO</text>
<text class="map-n" x="865" y="222" textLength="147" lengthAdjust="spacingAndGlyphs">TURKIYE</text>
<text class="map-n" x="793" y="299" textLength="99" lengthAdjust="spacingAndGlyphs">LIBYA</text>
<text class="map-n" x="930" y="304" textLength="110" lengthAdjust="spacingAndGlyphs">SAUDI</text>
<text class="map-n" x="922" y="349" textLength="128" lengthAdjust="spacingAndGlyphs">ARABIA</text>
<text class="map-n" x="698" y="351" textLength="85" lengthAdjust="spacingAndGlyphs">MALI</text>
<text class="map-n" x="1190" y="257" textLength="138" lengthAdjust="spacingAndGlyphs">CHINA</text>
<text class="map-n" x="1385" y="252" textLength="120" lengthAdjust="spacingAndGlyphs">JAPAN</text>
<text class="map-n" x="1093" y="326" textLength="130" lengthAdjust="spacingAndGlyphs">INDIA</text>
<text class="map-n" x="1270" y="379" textLength="240" lengthAdjust="spacingAndGlyphs">PHILIPPINES</text>
<text class="map-n" x="287" y="432" textLength="186" lengthAdjust="spacingAndGlyphs">COLOMBIA</text>
<text class="map-n" x="770" y="504" textLength="145" lengthAdjust="spacingAndGlyphs">ANGOLA</text>
<text class="map-n" x="763" y="552" textLength="150" lengthAdjust="spacingAndGlyphs">NAMIBIA</text>
<text class="map-n" x="328" y="654" textLength="102" lengthAdjust="spacingAndGlyphs">CHILE</text>
<text class="map-n" x="1372" y="498" textLength="100" lengthAdjust="spacingAndGlyphs">NEW</text>
<text class="map-n" x="718" y="41" textLength="155" lengthAdjust="spacingAndGlyphs">NORWAY</text>

<text class="map-c" x="10" y="150" textLength="475" lengthAdjust="spacingAndGlyphs">NORTH AMERICA</text>
<text class="map-c" x="715" y="162" textLength="235" lengthAdjust="spacingAndGlyphs">EUROPE</text>
<text class="map-c" x="1145" y="178" textLength="130" lengthAdjust="spacingAndGlyphs">ASIA</text>
<text class="map-c" x="775" y="422" textLength="200" lengthAdjust="spacingAndGlyphs">AFRICA</text>
<text class="map-c" x="225" y="526" textLength="483" lengthAdjust="spacingAndGlyphs">SOUTH AMERICA</text>
<text class="map-c" x="678" y="1123" textLength="360" lengthAdjust="spacingAndGlyphs">ANTARCTICA</text>
<text class="map-c" x="1393" y="645" textLength="260" lengthAdjust="spacingAndGlyphs">OCEANIA</text>

<circle cx="262" cy="240" r="71" fill="#f1d357" fill-opacity=".55"/><circle cx="262" cy="240" r="55" fill="#f1c72f"/>
<text x="262" y="254" text-anchor="middle" font-family="Liberation Sans" font-size="38" fill="#24304a">20</text>
<circle cx="748" cy="426" r="71" fill="#a6dc78" fill-opacity=".6"/><circle cx="748" cy="426" r="54" fill="#7fd059"/>
<text x="748" y="440" text-anchor="middle" font-family="Liberation Sans" font-size="38" fill="#24304a">3</text>

<g><path d="M775 65l17 26 17-26z" fill="#fff"/><circle cx="792" cy="22" r="60" fill="#fff"/><circle cx="792" cy="22" r="54" fill="#b02a85"/>
<path d="M776 -14v-6h32v6" fill="none" stroke="#fff" stroke-width="6"/><path d="M758 -8h68v24h-26v-7h-16v7h-26z" fill="#fff"/><path d="M758 22h26v7h16v-7h26v26h-68z" fill="#fff"/></g>
<g><path d="M1161 325l17 26 17-26z" fill="#fff"/><circle cx="1178" cy="275" r="60" fill="#fff"/><circle cx="1178" cy="275" r="54" fill="#b02a85"/>
<path d="M1162 239v-6h32v6" fill="none" stroke="#fff" stroke-width="6"/><path d="M1144 245h68v24h-26v-7h-16v7h-26z" fill="#fff"/><path d="M1144 275h26v7h16v-7h26v26h-68z" fill="#fff"/></g>
</svg>

<!-- map controls -->
<div class="a" style="left:1869px;top:740px;width:38px;height:74px;background:#fff;border:2px solid #bfc4c8;border-radius:4px"></div>
<div class="h" style="left:1871px;top:776px;width:34px;background:#c8c8c8"></div>
<svg class="a" style="left:1880px;top:751px" width="16" height="16"><path d="M8 1v14M1 8h14" stroke="#111" stroke-width="2.200"/></svg>
<svg class="a" style="left:1880px;top:786px" width="16" height="16"><path d="M1 8h14" stroke="#111" stroke-width="2.200"/></svg>
<svg class="a" style="left:1472px;top:769px;border-radius:4px" width="49" height="48" viewBox="0 0 49 48">
<rect width="49" height="48" fill="#4c6a3a" filter="url(#sat)"/><path d="M3 36c2-5 5-6 7-10 3 1 2 5 0 7-1 3-3 6-6 6z" fill="#1c3036"/><rect x=".5" y=".5" width="48" height="47" rx="4" fill="none" stroke="#5b6b78"/></svg>

<!-- annotation arrows -->
<svg class="a" style="left:0;top:0;pointer-events:none" width="1920" height="827" fill="#f9504a" stroke="#f9504a">
<path d="M393 119L504 59" stroke-width="4.500" fill="none"/><path d="M516 52L500 70 493 55z" stroke-width="1"/>
<path d="M720 139L797 87" stroke-width="4.500" fill="none"/><path d="M809 78L795 98 786 83z" stroke-width="1"/>
<path d="M992 200L1065 84" stroke-width="4.500" fill="none"/><path d="M1074 71L1068 95 1055 87z" stroke-width="1"/>
<path d="M1723 197L1635 155" stroke-width="4.500" fill="none"/><path d="M1621 149L1645 150 1638 164z" stroke-width="1"/>
</svg>

<!-- annotation rects -->
<div class="red" style="left:87px;top:55px;width:310px;height:731px"></div>
<div class="red" style="left:426px;top:123px;width:291px;height:670px"></div>
<div class="red" style="left:737px;top:200px;width:716px;height:576px"></div>
<div class="red" style="left:1468px;top:199px;width:452px;height:622px"></div>

<div class="lab" style="left:487px;top:4px;width:186px;height:44px">Dispatcher Queue</div>
<div class="lab" style="left:801px;top:27px;width:74px;height:40px;font-size:18.5px">Users</div>
<div class="lab" style="left:1062px;top:23px;width:113px;height:44px;font-size:19.5px">Scheduler</div>
<div class="lab" style="left:1556px;top:118px;width:60px;height:53px;font-size:20.5px">Map</div>

</div></body></html>
